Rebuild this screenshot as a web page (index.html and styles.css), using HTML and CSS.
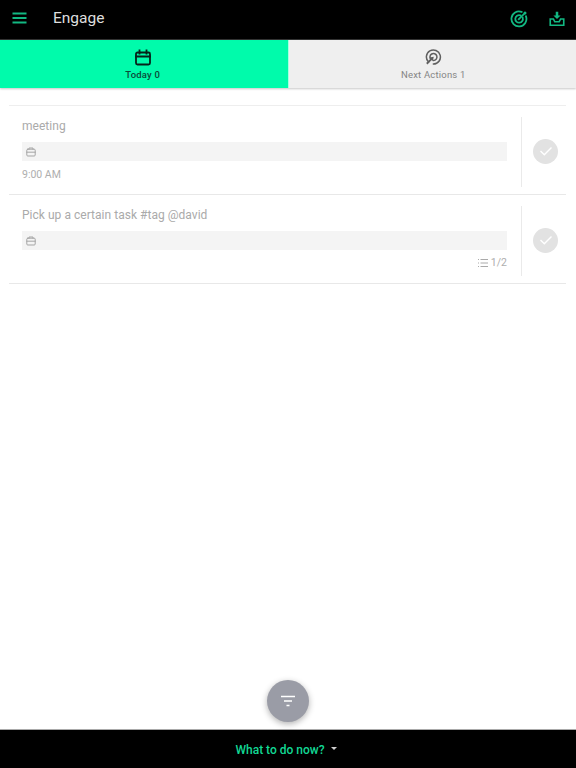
FILE: index.html
```html
<!DOCTYPE html>
<html>
<head>
<meta charset="utf-8"/>
<title>Engage</title>
<link rel="stylesheet" href="styles.css">
</head>
<body>
<div class="page">
  <header class="topbar">
    <svg class="menu-icon" width="24" height="24" viewBox="0 0 24 24"><path d="M4.500 7.500h14M4.500 12h14M4.500 16.500h14"/></svg>
    <div class="title">Engage</div>
    <svg class="top-icon target" width="18" height="18" viewBox="0 0 18 18"><path d="M11.600 1.900A7.500 7.500 0 1 0 16 6.400"/><path d="M10.300 5.300A3.800 3.800 0 1 0 12.700 7.700"/><path d="M8.800 9.200L14.500 3.500"/><circle class="dot" cx="15" cy="3" r="1.500"/></svg>
    <svg class="top-icon tray" width="18" height="18" viewBox="0 0 20 20"><path d="M6 10H2.500v7h15v-7H14l-1.500 3h-5z"/><path class="solid" d="M8.600 2h2.800v4h2.600L10 10 6 6h2.600z"/></svg>
  </header>

  <nav class="tabs">
    <div class="tab tab-on">
      <svg width="18" height="18" viewBox="0 0 18 18"><rect x="2" y="3.500" width="14" height="12" rx="1.500"/><path d="M2 7.500h14M5.500 1.500v3M12.500 1.500v3"/></svg>
      <span>Today 0</span>
    </div>
    <div class="tab tab-off">
      <svg width="18" height="18" viewBox="0 0 18 18"><path d="M4.500 13A7 7 0 1 1 9.500 15"/><path d="M7 10.500A3.500 3.500 0 1 1 9.500 11.500"/><path class="solid" d="M9.800 7.700l-1 4.400-1.100-1.100-4.200 4.500-1.400-1.400 4.300-4.400-1.100-1.100z"/></svg>
      <span>Next Actions 1</span>
    </div>
  </nav>

  <main class="list">
    <div class="task">
      <div class="task-body">
        <div class="task-name">meeting</div>
        <div class="project"><svg class="case" width="12" height="12" viewBox="0 0 12 12"><rect x="1.800" y="3.200" width="8.400" height="6.800" rx="1"/><path d="M4 3.200V2h4v1.200M1.800 6.200h8.400"/></svg></div>
        <div class="task-meta">9:00 AM</div>
      </div>
      <div class="task-side"><div class="check"><svg width="16" height="16" viewBox="0 0 16 16"><path d="M3 8.500l3.300 3.200L13 5"/></svg></div></div>
    </div>
    <div class="task">
      <div class="task-body">
        <div class="task-name">Pick up a certain task #tag @david</div>
        <div class="project"><svg class="case" width="12" height="12" viewBox="0 0 12 12"><rect x="1.800" y="3.200" width="8.400" height="6.800" rx="1"/><path d="M4 3.200V2h4v1.200M1.800 6.200h8.400"/></svg></div>
        <div class="task-meta task-steps"><svg width="12" height="12" viewBox="0 0 12 12"><path d="M3.500 2.500H11M3.500 6H11M3.500 9.500H11M1 2.500h1M1 6h1M1 9.500h1"/></svg>1/2</div>
      </div>
      <div class="task-side"><div class="check"><svg width="16" height="16" viewBox="0 0 16 16"><path d="M3 8.500l3.300 3.200L13 5"/></svg></div></div>
    </div>
  </main>

  <button class="fab"><svg width="18" height="18" viewBox="0 0 18 18"><path d="M2 4.500h14M5 9h8M7.500 13.500h3"/></svg></button>

  <footer class="bottombar">What to do now?<span class="caret"></span></footer>
</div>
</body>
</html>
```

FILE: styles.css
```css
html, body {
  margin: 0;
  padding: 0;
  background: white;
}

.page {
  height: 768px;
  display: flex;
  flex-direction: column;
  font-family: Roboto, "Liberation Sans", sans-serif;
  overflow: hidden;
}

svg {
  display: block;
  fill: none;
  stroke-linecap: square;
}

.topbar {
  height: 40px;
  flex: none;
  background: black;
  display: flex;
  align-items: center;
  padding: 0 10px 3px 8px;
  box-sizing: border-box;
  border-bottom: 1px solid #333;
}

.menu-icon {
  stroke: #12b882;
  stroke-width: 2;
  stroke-linecap: butt;
}

.title {
  flex: 1;
  margin-left: 21px;
  color: #dedede;
  font-size: 15.500px;
}

.top-icon {
  stroke: #12b882;
  stroke-width: 1.800;
  margin-top: 2px;
}

.top-icon .solid, .top-icon .dot {
  fill: #12b882;
  stroke: none;
}

.target {
  margin-right: 20px;
}

.tabs {
  height: 48px;
  flex: none;
  display: flex;
  box-shadow: 0 1px 2px rgba(0, 0, 0, 0.22);
}

.tab {
  flex: 1;
  background: #efefef;
  color: #858585;
  font-size: 9.500px;
  font-weight: 400;
  letter-spacing: 0.2px;
  display: flex;
  flex-direction: column;
  align-items: center;
  padding-top: 9px;
  box-sizing: border-box;
  gap: 2px;
}

.tab svg {
  stroke: #606060;
  stroke-width: 1.500;
}

.tab .solid {
  fill: #606060;
  stroke: none;
}

.tab-on {
  background: #00fbab;
  color: #0c4a38;
  font-weight: 500;
  padding-right: 2px;
}

.tab-on svg {
  stroke: #06231a;
  stroke-width: 1.800;
}

.tab-off {
  border-left: 1px solid #a8ffe2;
  padding-left: 2px;
}

.list {
  flex: 1;
  margin: 17px 10px 0 9px;
  border-top: 1px solid #eee;
}

.task {
  height: 89px;
  box-sizing: border-box;
  border-bottom: 1px solid #e8e8e8;
  display: flex;
  padding: 11px 0 7px 13px;
}

.task-body {
  flex: 1;
  min-width: 0;
}

.task-name {
  color: #aaa;
  font-size: 12px;
  line-height: 18px;
  letter-spacing: 0.03px;
}

.project {
  height: 19px;
  margin-top: 7px;
  background: #f4f4f4;
  display: flex;
  align-items: center;
  padding-left: 3px;
}

.case {
  stroke: #a5a5a5;
  stroke-width: 1;
}

.task-meta {
  color: #aeaeae;
  font-size: 10.500px;
  line-height: 14px;
  margin-top: 7px;
}

.task-steps {
  display: flex;
  justify-content: flex-end;
  align-items: center;
  gap: 2px;
  margin-top: 6px;
}

.task-steps svg {
  stroke: #aaa;
  stroke-width: 1;
  stroke-linecap: butt;
}

.task-side {
  width: 45px;
  margin-left: 14px;
  border-left: 1px solid #eaeaea;
  display: flex;
  align-items: center;
  padding-left: 11px;
  box-sizing: border-box;
}

.check {
  width: 25px;
  height: 25px;
  margin-top: -2px;
  border-radius: 50%;
  background: #e2e2e2;
  display: flex;
  align-items: center;
  justify-content: center;
}

.check svg {
  stroke: white;
  stroke-width: 1.400;
}

.fab {
  position: absolute;
  left: 267px;
  top: 680px;
  width: 42px;
  height: 42px;
  padding: 0;
  border: none;
  border-radius: 50%;
  background: #9a9ca6;
  box-shadow: 0 2px 6px rgba(0, 0, 0, 0.3);
  display: flex;
  align-items: center;
  justify-content: center;
}

.fab svg {
  stroke: white;
  stroke-width: 1.500;
  stroke-linecap: butt;
}

.bottombar {
  height: 39px;
  flex: none;
  background: black;
  border-top: 1px solid #aaa;
  color: #12d894;
  font-size: 12px;
  font-weight: 500;
  display: flex;
  align-items: center;
  justify-content: center;
  padding: 2px 4px 0 0;
  box-sizing: border-box;
}

.caret {
  margin-left: 6px;
  margin-bottom: 4px;
  border-top: 3px solid #d0d0d0;
  border-left: 3px solid transparent;
  border-right: 3px solid transparent;
}
```
